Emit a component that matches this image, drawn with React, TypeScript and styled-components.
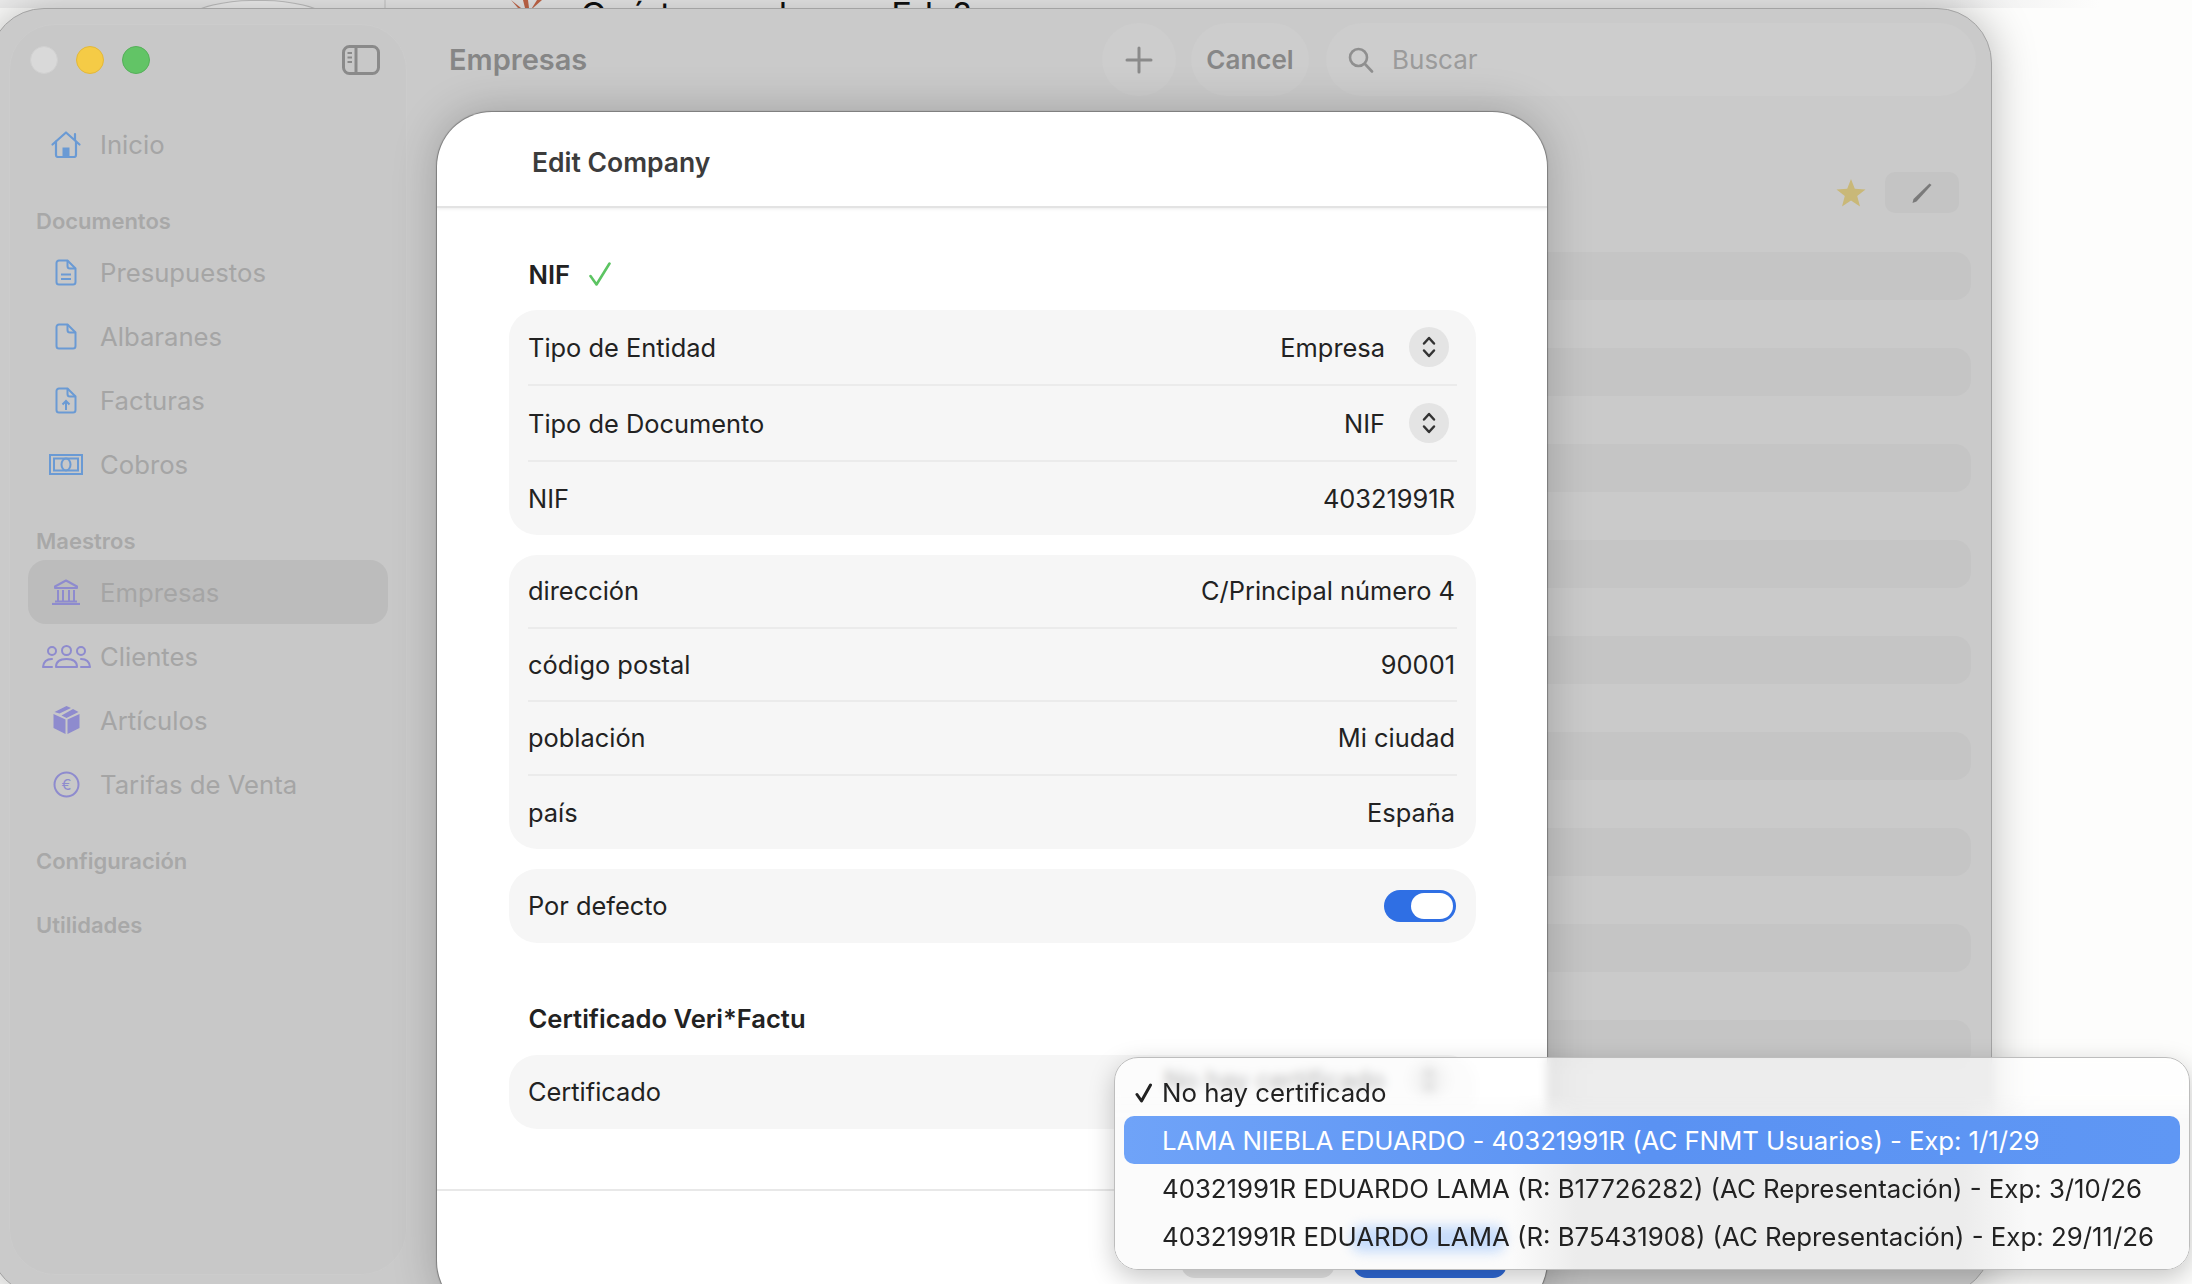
import styled, { createGlobalStyle } from 'styled-components';

const GlobalStyle = createGlobalStyle`
  html, body {
    margin: 0;
    padding: 0;
    background: #fdfdfc;
  }
  body {
    font-family: Inter, "Noto Sans", "Liberation Sans", sans-serif;
    -webkit-font-smoothing: antialiased;
  }
`;

const Desktop = styled.div`
  position: relative;
  width: 2192px;
  height: 1284px;
  overflow: hidden;
  background: #fdfdfc;
`;

// other window that peeks out above ours
const BackStrip = styled.div`
  display: flex;
  height: 8px;
  width: 2100px;
  overflow: hidden;
  background: linear-gradient(90deg, #efefef 93%, #fdfdfc);
  align-items: flex-start;
`;

const BackField = styled.div`
  width: 214px;
  height: 60px;
  margin: 0 19px 0 151px;
  flex: none;
  background: #f6f6f6;
  border: 1.5px solid #c4c4c4;
  border-radius: 100px 100px 0 0 / 60px 60px 0 0;
  box-sizing: border-box;
`;

const BackDivider = styled.div`
  width: 1.5px;
  height: 8px;
  background: #dcdcdc;
  flex: none;
`;

const BackLogo = styled.svg`
  margin-left: 123px;
  flex: none;
`;

const BackText = styled.div`
  margin: -5px 0 0 38px;
  font-size: 34.5px;
  line-height: 40px;
  color: #111;
  white-space: nowrap;
  word-spacing: 3px;
`;

const Window = styled.div`
  position: absolute;
  left: -11px;
  top: 8px;
  width: 2003px;
  height: 1288px;
  box-sizing: border-box;
  display: flex;
  padding: 15px 15px 20px 19px;
  background: #cacaca;
  border: 1px solid #a3a3a3;
  border-radius: 55px;
  box-shadow: 0 0 45px rgba(0, 0, 0, 0.28);
  overflow: hidden;
`;

const Sidebar = styled.aside`
  width: 398px;
  flex: none;
  box-sizing: border-box;
  padding: 0 18px;
  background: #c8c8c8;
  border: 1px solid #cccccc;
  border-radius: 46px;
  display: flex;
  flex-direction: column;
`;

const SidebarTop = styled.div`
  height: 70px;
  margin: 0 8px 17px 2px;
  display: flex;
  align-items: center;
  justify-content: space-between;
`;

const Lights = styled.div`
  display: flex;
  gap: 18px;
`;

const Light = styled.span<{ $color: string; $edge: string }>`
  width: 28px;
  height: 28px;
  border-radius: 50%;
  box-sizing: border-box;
  background: ${p => p.$color};
  border: 1px solid ${p => p.$edge};
`;

const SectionLabel = styled.div`
  height: 64px;
  box-sizing: border-box;
  padding: 0 0 4px 8px;
  display: flex;
  align-items: flex-end;
  font-size: 22px;
  line-height: 30px;
  font-weight: 600;
  color: #a8a8a8;
`;

const NavItem = styled.div<{ $active?: boolean }>`
  height: 64px;
  flex: none;
  display: flex;
  align-items: center;
  gap: 8px;
  padding-left: 12px;
  border-radius: 18px;
  background: ${p => (p.$active ? '#bcbcbc' : 'transparent')};
  font-size: 25.7px;
  color: #a5a5a5;
`;

const NavIcon = styled.span`
  width: 52px;
  flex: none;
  display: flex;
  justify-content: center;
`;

const Main = styled.main`
  flex: 1;
  min-width: 0;
  display: flex;
  flex-direction: column;
`;

const Toolbar = styled.div`
  height: 73px;
  margin-top: -1px;
  flex: none;
  display: flex;
  align-items: center;
`;

const Title = styled.h1`
  margin: 0 auto 0 42px;
  font-size: 29px;
  font-weight: 600;
  color: #868686;
`;

const Pill = styled.div<{ $w: number }>`
  width: ${p => p.$w}px;
  height: 73px;
  flex: none;
  box-sizing: border-box;
  display: flex;
  align-items: center;
  justify-content: center;
  border-radius: 37px;
  background: #cdcdcd;
`;

const CancelPill = styled(Pill)`
  margin-left: 15px;
  font-size: 26px;
  font-weight: 600;
  color: #878787;
`;

const SearchPill = styled(Pill)`
  margin-left: 17px;
  justify-content: flex-start;
  padding-left: 22px;
  gap: 18px;
  font-size: 26px;
  color: #9b9b9b;
`;

const ActionRow = styled.div`
  margin: 76px 17px 39px 0;
  height: 41px;
  flex: none;
  display: flex;
  justify-content: flex-end;
  align-items: center;
  gap: 19px;
`;

const EditButton = styled.div`
  width: 74px;
  height: 41px;
  display: flex;
  align-items: center;
  justify-content: center;
  border-radius: 10px;
  background: #c4c4c4;
`;

const BackList = styled.div`
  margin: 0 5px 0 40px;
  display: flex;
  flex-direction: column;
  gap: 48px;
`;

const BackRow = styled.div`
  height: 48px;
  flex: none;
  border-radius: 16px;
  background: #c5c5c5;
`;

const Modal = styled.section`
  position: absolute;
  left: 437px;
  top: 112px;
  width: 1110px;
  height: 1204px;
  background: #fff;
  border-radius: 55px;
  box-shadow: 0 0 1px 1px rgba(0, 0, 0, 0.32), 0 0 45px rgba(0, 0, 0, 0.22);
  overflow: hidden;
  display: flex;
  flex-direction: column;
`;

const ModalHeader = styled.header`
  height: 96px;
  flex: none;
  box-sizing: border-box;
  padding: 5px 0 0 95px;
  display: flex;
  align-items: center;
  border-bottom: 2px solid #e3e3e3;
  box-shadow: 0 1px 3px rgba(0, 0, 0, 0.08);
  font-size: 26.5px;
  font-weight: 600;
  color: #3c3c3c;
`;

const ModalBody = styled.div`
  padding: 0 71px 0 72px;
  color: #222;
  display: flex;
  flex-direction: column;
`;

const FormLabel = styled.div<{ $top: number }>`
  height: 32px;
  margin: ${p => p.$top}px 0 20px 19.5px;
  display: flex;
  align-items: center;
  gap: 19px;
  font-size: 25.6px;
  font-weight: 600;
`;

const Group = styled.div<{ $last?: boolean }>`
  padding: 0 19px;
  margin-bottom: ${p => (p.$last ? 0 : 20)}px;
  border-radius: 28px;
  background: #f6f6f6;
`;

const Row = styled.div<{ $h?: number }>`
  height: ${p => p.$h ?? 73.5}px;
  box-sizing: border-box;
  display: flex;
  align-items: center;
  justify-content: space-between;
  font-size: 25.4px;
  border-bottom: 2px solid #ebebeb;

  &:last-child {
    border-bottom: 0;
  }
`;

const RowValue = styled.span`
  margin-right: 2px;
`;

const SelectValue = styled.div<{ $lift?: number }>`
  display: flex;
  align-items: center;
  gap: 24px;
  margin: 0 8px ${p => p.$lift ?? 0}px 0;
`;

const ChevronWell = styled.span`
  width: 40px;
  height: 40px;
  border-radius: 50%;
  display: flex;
  align-items: center;
  justify-content: center;
  background: #e4e4e4;
`;

const Toggle = styled.div`
  width: 72px;
  height: 32px;
  margin-right: 1px;
  box-sizing: border-box;
  padding: 3px;
  display: flex;
  justify-content: flex-end;
  border-radius: 16px;
  background: #2f6fe4;
`;

const ToggleKnob = styled.span`
  width: 42px;
  height: 26px;
  border-radius: 13px;
  background: #fff;
`;

const ModalFooter = styled.footer`
  margin-top: 60px;
  padding: 40px 40px 0 0;
  border-top: 2px solid #e8e8e8;
  display: flex;
  justify-content: flex-end;
  gap: 18px;
`;

const FooterButton = styled.div<{ $color: string }>`
  width: 154px;
  height: 47px;
  border-radius: 14px;
  background: ${p => p.$color};
`;

const Popup = styled.div`
  position: absolute;
  left: 1114px;
  top: 1057px;
  width: 1076px;
  height: 213px;
  box-sizing: border-box;
  padding: 10px 9px;
  border-radius: 24px;
  border: 1px solid #bdbdbd;
  overflow: hidden;
  background: rgba(255, 255, 255, 0.66);
  backdrop-filter: blur(5px);
  box-shadow: 0 8px 26px rgba(0, 0, 0, 0.22);

  /* opaque lower part: only the top of the menu shows the row below it */
  &::before {
    content: '';
    position: absolute;
    inset: 0;
    background: linear-gradient(90deg, #fbfbfb 37%, #ececec 43%, #ececec 79%, #f9f9f9 85%);
    -webkit-mask-image: linear-gradient(180deg, transparent 36px, #000 62px);
    mask-image: linear-gradient(180deg, transparent 36px, #000 62px);
  }
`;

const BlueGlow = styled.span`
  position: absolute;
  left: 236px;
  top: 168px;
  width: 154px;
  height: 26px;
  border-radius: 10px;
  background: #c6dcfb;
  filter: blur(6px);
`;

const PopupItem = styled.div<{ $selected?: boolean }>`
  position: relative;
  height: 48px;
  padding-left: 38px;
  display: flex;
  align-items: center;
  border-radius: 10px;
  white-space: nowrap;
  font-size: 25.8px;
  color: ${p => (p.$selected ? '#fff' : '#222')};
  background: ${p => (p.$selected ? 'linear-gradient(90deg, #6fa3f8, #5a92f3 50%, #5f97f4)' : 'transparent')};
`;

const SelectedName = styled.span`
  letter-spacing: -0.07px;
`;

const CheckMark = styled.svg`
  position: absolute;
  left: 11px;
  top: 15px;
`;

const blue = '#6a9ad4';
const purple = '#8e8bce';

function DocShape() {
  return (
    <>
      <path d="M1.5 4a2.5 2.5 0 0 1 2.5-2.5h8.5l8 8V23a2.5 2.5 0 0 1-2.5 2.5H4A2.5 2.5 0 0 1 1.5 23z" />
      <path d="M12.5 1.5V7A2.5 2.5 0 0 0 15 9.5h5.5" />
    </>
  );
}

function HomeIcon() {
  return (
    <svg width="30" height="27" viewBox="0 0 30 27" fill="none" stroke={blue} strokeWidth="2.2" strokeLinecap="round" strokeLinejoin="round">
      <path d="M1.5 13.5 15 1.5l13.5 12M24 3v6" />
      <path d="M5 10.5V24a2 2 0 0 0 2 2h16a2 2 0 0 0 2-2V10.5" />
      <rect x="11.5" y="16.5" width="7" height="9.5" fill={blue} stroke="none" />
    </svg>
  );
}

function DocLinesIcon() {
  return (
    <svg width="22" height="27" viewBox="0 0 22 27" fill="none" stroke={blue} strokeWidth="2">
      <DocShape />
      <path d="M6 15.5h10M6 20h10" />
    </svg>
  );
}

function DocIcon() {
  return (
    <svg width="22" height="27" viewBox="0 0 22 27" fill="none" stroke={blue} strokeWidth="2">
      <DocShape />
    </svg>
  );
}

function DocArrowIcon() {
  return (
    <svg width="22" height="27" viewBox="0 0 22 27" fill="none" stroke={blue} strokeWidth="2">
      <DocShape />
      <path d="M11 23v-9M7.5 17.5 11 14l3.5 3.5" />
    </svg>
  );
}

function BanknoteIcon() {
  return (
    <svg width="34" height="21" viewBox="0 0 34 21" fill="none" stroke={blue} strokeWidth="2">
      <rect x="1" y="1" width="32" height="19" />
      <rect x="5" y="4.5" width="24" height="12" />
      <ellipse cx="17" cy="10.5" rx="4.5" ry="6" />
    </svg>
  );
}

function BankIcon() {
  return (
    <svg width="28" height="26" viewBox="0 0 28 26" fill="none" stroke={purple} strokeWidth="2" strokeLinejoin="round">
      <path d="M14 1.5 3 7.5V9h22V7.5z" />
      <path d="M6 11v11M11 11v11M17 11v11M22 11v11" />
      <path d="M3 22.5h22" />
      <path d="M0 25h28" strokeWidth="2.2" />
    </svg>
  );
}

function PeopleIcon() {
  return (
    <svg width="49" height="23" viewBox="0 0 49 23" fill="none" stroke={purple} strokeWidth="2" strokeLinecap="round" strokeLinejoin="round">
      <circle cx="10" cy="6" r="4" />
      <circle cx="24.5" cy="5.5" r="4.5" />
      <circle cx="39" cy="6" r="4" />
      <path d="M14 22c0-5.5 4.5-8 10.5-8S35 16.5 35 22z" />
      <path d="M10 14c-5 0-8.500 3-9 8h9M39 14c5 0 8.500 3 9 8h-9" />
    </svg>
  );
}

function BoxIcon() {
  return (
    <svg width="27" height="28" viewBox="0 0 27 28" fill={purple}>
      <path d="M0.500 8 12.500 13.500V28L0.500 22z" />
      <path d="M26.500 8 14.500 13.500V28L26.500 22z" />
      <path d="M13.500 0 18 2 6.500 7.500 1.500 6z" />
      <path d="M20 3 25.500 6 13.500 12 8.500 9.500z" />
    </svg>
  );
}

function EuroIcon() {
  return (
    <svg width="27" height="27" viewBox="0 0 27 27" fill="none">
      <circle cx="13.500" cy="13.500" r="12" stroke={purple} strokeWidth="2" />
      <text x="13.500" y="19" textAnchor="middle" fontSize="15" fontFamily="Inter, sans-serif" fill={purple}>€</text>
    </svg>
  );
}

function SidebarToggleIcon() {
  return (
    <svg width="38" height="30" viewBox="0 0 38 30" fill="none" stroke="#8a8a8a" strokeWidth="3">
      <rect x="1.500" y="1.500" width="35" height="27" rx="6" />
      <path d="M14 1.500v27" />
      <path d="M5.500 8h4.500M5.500 12.500h4.500M5.500 17h4.500" strokeWidth="2" />
    </svg>
  );
}

function ChevronUpDown() {
  return (
    <svg width="14" height="24" viewBox="0 0 14 24" fill="none" stroke="#333" strokeWidth="2.500" strokeLinecap="round" strokeLinejoin="round">
      <path d="M2 8.500 7 3l5 5.500M2 15.500 7 21l5-5.500" />
    </svg>
  );
}

export default function App() {
  return (
    <Desktop>
      <GlobalStyle />
      <BackStrip>
        <BackField />
        <BackDivider />
        <BackLogo width="34" height="8" viewBox="0 0 34 8">
          <path d="M2 0 12 8H16L14 0H19L20 8H23L28 0H33L24 8H9z" fill="#c9694a" />
        </BackLogo>
        <BackText>Qué tengo de ese Edu?</BackText>
      </BackStrip>

      <Window>
        <Sidebar>
          <SidebarTop>
            <Lights>
              <Light $color="#d9d9d9" $edge="#d0d0d0" />
              <Light $color="#f5cb46" $edge="#e3b83a" />
              <Light $color="#62c466" $edge="#55b059" />
            </Lights>
            <SidebarToggleIcon />
          </SidebarTop>
          <NavItem><NavIcon><HomeIcon /></NavIcon>Inicio</NavItem>
          <SectionLabel>Documentos</SectionLabel>
          <NavItem><NavIcon><DocLinesIcon /></NavIcon>Presupuestos</NavItem>
          <NavItem><NavIcon><DocIcon /></NavIcon>Albaranes</NavItem>
          <NavItem><NavIcon><DocArrowIcon /></NavIcon>Facturas</NavItem>
          <NavItem><NavIcon><BanknoteIcon /></NavIcon>Cobros</NavItem>
          <SectionLabel>Maestros</SectionLabel>
          <NavItem $active><NavIcon><BankIcon /></NavIcon>Empresas</NavItem>
          <NavItem><NavIcon><PeopleIcon /></NavIcon>Clientes</NavItem>
          <NavItem><NavIcon><BoxIcon /></NavIcon>Artículos</NavItem>
          <NavItem><NavIcon><EuroIcon /></NavIcon>Tarifas de Venta</NavItem>
          <SectionLabel>Configuración</SectionLabel>
          <SectionLabel>Utilidades</SectionLabel>
        </Sidebar>

        <Main>
          <Toolbar>
            <Title>Empresas</Title>
            <Pill $w={74}>
              <svg width="28" height="28" viewBox="0 0 28 28" stroke="#8a8a8a" strokeWidth="3" strokeLinecap="round">
                <path d="M14 2v24M2 14h24" />
              </svg>
            </Pill>
            <CancelPill $w={118}>Cancel</CancelPill>
            <SearchPill $w={650}>
              <svg width="26" height="26" viewBox="0 0 26 26" fill="none" stroke="#8f8f8f" strokeWidth="2.600" strokeLinecap="round">
                <circle cx="10.500" cy="10.500" r="8.500" />
                <path d="M17 17l7 7.500" />
              </svg>
              Buscar
            </SearchPill>
          </Toolbar>

          <ActionRow>
            <svg width="30" height="28" viewBox="0 0 30 28" fill="#c9b878">
              <path d="M15 0l3.800 9.800 10.700.6-8.300 6.700 2.800 10.400L15 21.600l-9 5.900 2.800-10.400L.5 10.400l10.700-.6z" />
            </svg>
            <EditButton>
              <svg width="22" height="22" viewBox="0 0 22 22" fill="#7a7a7a">
                <path d="M18.500 1.500 20.500 3 5.500 19.500 1.500 21l1-4z" />
              </svg>
            </EditButton>
          </ActionRow>

          <BackList>
            {Array.from({ length: 11 }).map((_, i) => <BackRow key={i} />)}
          </BackList>
        </Main>
      </Window>

      <Modal>
        <ModalHeader>Edit Company</ModalHeader>
        <ModalBody>
          <FormLabel $top={50}>
            NIF
            <svg width="22" height="24" viewBox="0 0 22 24" fill="none" stroke="#5cc462" strokeWidth="2.600" strokeLinecap="round" strokeLinejoin="round">
              <path d="M1.500 14 7.500 22.500 20.500 1.500" />
            </svg>
          </FormLabel>
          <Group>
            <Row $h={76}>
              <span>Tipo de Entidad</span>
              <SelectValue>Empresa<ChevronWell><ChevronUpDown /></ChevronWell></SelectValue>
            </Row>
            <Row $h={76}>
              <span>Tipo de Documento</span>
              <SelectValue>NIF<ChevronWell><ChevronUpDown /></ChevronWell></SelectValue>
            </Row>
            <Row $h={73}>
              <span>NIF</span>
              <RowValue>40321991R</RowValue>
            </Row>
          </Group>
          <Group>
            <Row><span>dirección</span><RowValue>C/Principal número 4</RowValue></Row>
            <Row><span>código postal</span><RowValue>90001</RowValue></Row>
            <Row><span>población</span><RowValue>Mi ciudad</RowValue></Row>
            <Row><span>país</span><RowValue>España</RowValue></Row>
          </Group>
          <Group $last>
            <Row>
              <span>Por defecto</span>
              <Toggle><ToggleKnob /></Toggle>
            </Row>
          </Group>
          <FormLabel $top={60}>Certificado Veri*Factu</FormLabel>
          <Group $last>
            <Row $h={74}>
              <span>Certificado</span>
              <SelectValue $lift={24}>No hay certificado<ChevronWell><ChevronUpDown /></ChevronWell></SelectValue>
            </Row>
          </Group>
        </ModalBody>
        <ModalFooter>
          <FooterButton $color="#e6e6e6" />
          <FooterButton $color="#2f69d6" />
        </ModalFooter>
      </Modal>

      <Popup>
        <BlueGlow />
        <PopupItem>
          <CheckMark width="18" height="20" viewBox="0 0 18 20" fill="none" stroke="#222" strokeWidth="3" strokeLinecap="round" strokeLinejoin="round">
            <path d="M2 11.500 6.500 18 15.500 2" />
          </CheckMark>
          No hay certificado
        </PopupItem>
        <PopupItem $selected><SelectedName>LAMA NIEBLA EDUARDO - 40321991R (AC FNMT Usuarios) - Exp: 1/1/29</SelectedName></PopupItem>
        <PopupItem>40321991R EDUARDO LAMA (R: B17726282) (AC Representación) - Exp: 3/10/26</PopupItem>
        <PopupItem>40321991R EDUARDO LAMA (R: B75431908) (AC Representación) - Exp: 29/11/26</PopupItem>
      </Popup>
    </Desktop>
  );
}
